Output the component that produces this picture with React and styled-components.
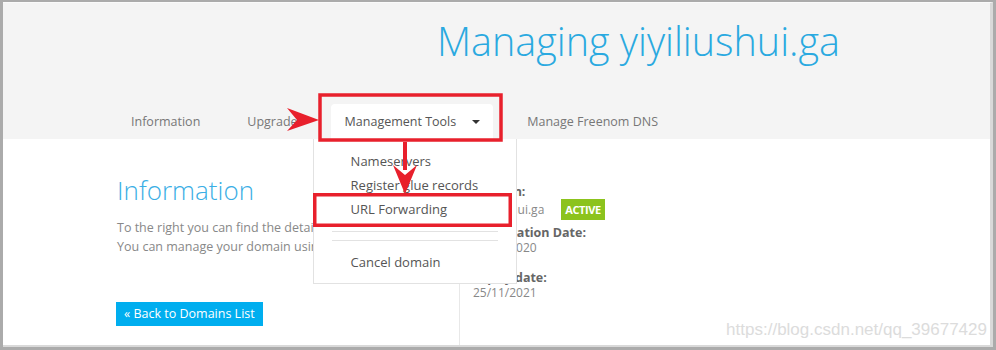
import React from "react";
import styled, { createGlobalStyle } from "styled-components";

const GlobalStyle = createGlobalStyle`
  body {
    margin: 0;
    background: #ababab;
    font-family: "Open Sans", "DejaVu Sans", sans-serif;
  }
`;

const tabs = ["Information", "Upgrade", "Management Tools", "Manage Freenom DNS"];
const menuItems = ["Nameservers", "Register glue records", "URL Forwarding"];

const DomainPage = () => {
  return (
    <Screen>
      <GlobalStyle />
      <Frame>
        <Header>
          <Title>Managing yiyiliushui.ga</Title>
          <TabRow>
            {tabs.map((t) =>
              t === "Management Tools" ? (
                <Tab key={t} active>
                  {t}
                  <Caret />
                  <Menu>
                    {menuItems.map((m) => (
                      <MenuItem key={m}>{m}</MenuItem>
                    ))}
                    <Divider />
                    <Divider second />
                    <MenuItem>Cancel domain</MenuItem>
                  </Menu>
                </Tab>
              ) : (
                <Tab key={t}>{t}</Tab>
              )
            )}
          </TabRow>
        </Header>
        <Body>
          <LeftCol>
            <Heading>Information</Heading>
            <Para>
              To the right you can find the details of your domain.
              <br />
              You can manage your domain using the tabs above.
            </Para>
            <BackButton>« Back to Domains List</BackButton>
          </LeftCol>
          <RightCol>
            <Label>Domain:</Label>
            <ValueRow>
              yiyiliushui.ga
              <Badge>ACTIVE</Badge>
            </ValueRow>
            <Label gap={5}>Registration Date:</Label>
            <Value>25/11/2020</Value>
            <Label gap={14}>Expiry date:</Label>
            <Value>25/11/2021</Value>
          </RightCol>
        </Body>
        <Watermark>https://blog.csdn.net/qq_39677429</Watermark>
      </Frame>
      <Marks width="996" height="350" viewBox="0 0 996 350">
        <rect x="320" y="95" width="181" height="45" fill="none" stroke="#e8202c" strokeWidth="3.5" />
        <rect x="314.75" y="194.75" width="195.5" height="30.5" fill="none" stroke="#e8202c" strokeWidth="3.5" />
        <polygon points="319,120 287,108 297,120 287,131" fill="#e8202c" />
        <rect x="403" y="142" width="4" height="28" fill="#e8202c" />
        <polygon points="405,194 393,165 405,175 417,165" fill="#e8202c" />
      </Marks>
    </Screen>
  );
};

export default DomainPage;

const Screen = styled.div`
  position: relative;
  width: 996px;
  height: 350px;
  box-sizing: border-box;
  padding: 2px 3px 3px 3px;
  overflow: hidden;
`;

const Frame = styled.div`
  position: relative;
  height: 100%;
  box-sizing: border-box;
  background: #fff;
  border-top: 1px solid #fafafa;
  border-right: 3px solid #d9d9d9;
  border-bottom: 2px solid #d9d9d9;
  display: flex;
  flex-direction: column;
`;

const Header = styled.div`
  height: 136px;
  background: #f4f4f4;
  display: flex;
  flex-direction: column;
  box-sizing: border-box;
  padding-top: 13px;
`;

const Title = styled.h1`
  margin: 0 0 0 434px;
  font-size: 39.5px;
  line-height: 50px;
  font-weight: 300;
  color: #2aa9e0;
  white-space: nowrap;
`;

const TabRow = styled.div`
  margin-top: auto;
  display: flex;
  gap: 19px;
  padding-left: 114px;
  height: 35px;
`;

const Tab = styled.div`
  position: relative;
  display: flex;
  align-items: center;
  padding: ${(p) => (p.active ? "0 13px 0 14px" : "0 14px")};
  margin-right: ${(p) => (p.active ? "1px" : "0")};
  font-size: 12.5px;
  color: ${(p) => (p.active ? "#555" : "#777")};
  background: ${(p) => (p.active ? "#fff" : "transparent")};
  border-radius: 4px 4px 0 0;
  white-space: nowrap;
`;

const Caret = styled.span`
  margin-left: 16px;
  width: 0;
  height: 0;
  border-left: 4px solid transparent;
  border-right: 4px solid transparent;
  border-top: 4px solid #333;
`;

const Menu = styled.div`
  position: absolute;
  top: 100%;
  left: -18px;
  width: 204px;
  box-sizing: border-box;
  padding: 10px 0 9px;
  background: #fff;
  border: 1px solid #e2e2e2;
  border-top: none;
  z-index: 2;
`;

const MenuItem = styled.div`
  padding-left: 37px;
  font-size: 13px;
  line-height: 24px;
  color: #555;
`;

const Divider = styled.div`
  margin: ${(p) => (p.second ? "8px 18px 9px" : "10px 18px 0")};
  border-top: 1px solid #e2e2e2;
`;

const Body = styled.div`
  flex: 1;
  display: flex;
`;

const LeftCol = styled.div`
  width: 456px;
  box-sizing: border-box;
  padding: 36px 0 0 113px;
`;

const Heading = styled.h2`
  margin: 0 0 0 1px;
  font-size: 26px;
  line-height: 31px;
  font-weight: 300;
  color: #3aaee5;
`;

const Para = styled.p`
  margin: 12px 0 0 1px;
  font-size: 12.5px;
  line-height: 19px;
  color: #888;
  white-space: nowrap;
`;

const BackButton = styled.div`
  display: inline-block;
  margin-top: 46px;
  height: 24px;
  line-height: 24px;
  padding: 0 8px;
  background: #00aeef;
  color: #fff;
  font-size: 12.5px;
`;

const RightCol = styled.div`
  flex: 1;
  margin-top: 30px;
  border-left: 1px solid #e8e8e8;
  padding: 15px 0 0 13px;
  font-size: 12px;
  color: #888;
`;

const Label = styled.div`
  margin-top: ${(p) => p.gap || 0}px;
  font-weight: 700;
  font-size: 12.5px;
  color: #666;
  line-height: 15px;
`;

const ValueRow = styled.div`
  display: flex;
  align-items: center;
  height: 21px;
`;

const Value = styled.div`
  line-height: 16px;
`;

const Badge = styled.span`
  margin-left: 17px;
  padding: 0 4px;
  height: 21px;
  line-height: 21px;
  background: #8cc31d;
  color: #fff;
  font-weight: 700;
  font-size: 11px;
  letter-spacing: -0.4px;
`;

const Watermark = styled.div`
  position: absolute;
  right: 3px;
  bottom: 5px;
  font-family: "Liberation Sans", Arial, sans-serif;
  font-size: 17px;
  color: #dcdcdc;
`;

const Marks = styled.svg`
  position: absolute;
  top: 0;
  left: 0;
  z-index: 5;
  pointer-events: none;
`;
